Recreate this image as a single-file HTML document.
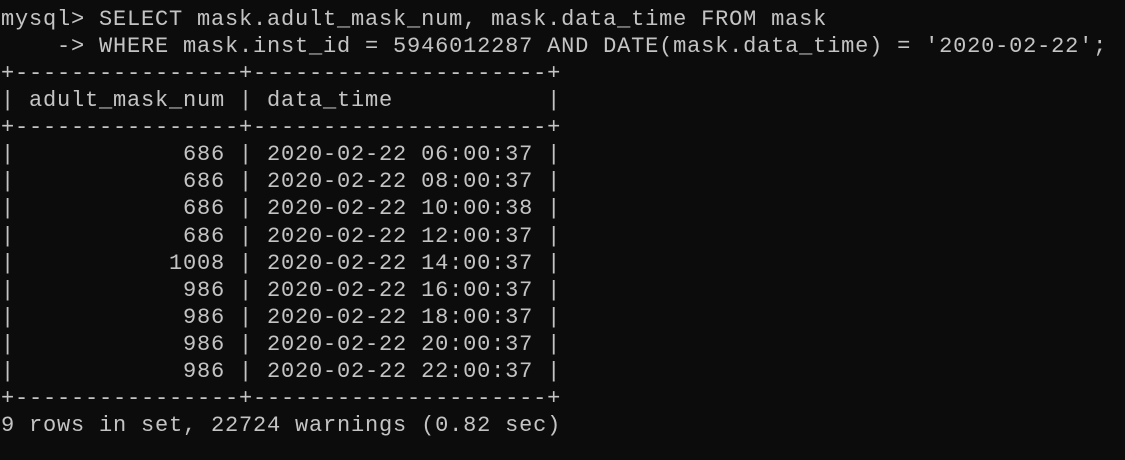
<!DOCTYPE html>
<html><head><meta charset="utf-8"><style>
html,body{margin:0;padding:0;background:#0c0c0c;width:1125px;height:460px;overflow:hidden}
pre{margin:0;padding:6px 0 0 1px;font-family:"Liberation Mono",monospace;font-size:22px;letter-spacing:0.8px;line-height:27.07px;color:#c4c4c4;white-space:pre}
</style></head><body><pre>mysql&gt; SELECT mask.adult_mask_num, mask.data_time FROM mask
    -&gt; WHERE mask.inst_id = 5946012287 AND DATE(mask.data_time) = '2020-02-22';
+----------------+---------------------+
| adult_mask_num | data_time           |
+----------------+---------------------+
|            686 | 2020-02-22 06:00:37 |
|            686 | 2020-02-22 08:00:37 |
|            686 | 2020-02-22 10:00:38 |
|            686 | 2020-02-22 12:00:37 |
|           1008 | 2020-02-22 14:00:37 |
|            986 | 2020-02-22 16:00:37 |
|            986 | 2020-02-22 18:00:37 |
|            986 | 2020-02-22 20:00:37 |
|            986 | 2020-02-22 22:00:37 |
+----------------+---------------------+
9 rows in set, 22724 warnings (0.82 sec)
</pre></body></html>
